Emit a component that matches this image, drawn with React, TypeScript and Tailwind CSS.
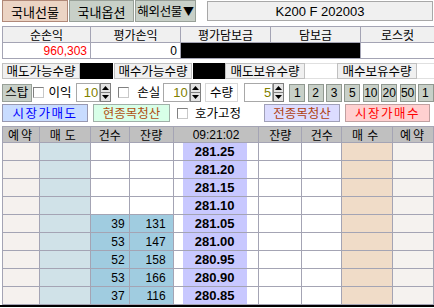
import React from "react";

const KR = "font-['Noto_Sans_CJK_KR','Liberation_Sans',sans-serif]";
const NUM = "font-['Liberation_Sans','DejaVu_Sans',sans-serif]";

function Check() {
  return <div className="w-[11px] h-[11px] border border-t-[#808080] border-l-[#808080] border-r-[#c8c8c8] border-b-[#c8c8c8] bg-white shrink-0" />;
}

function Arrows() {
  return (
    <div className="w-[11px] h-[19px] flex flex-col border border-[#808080] shrink-0">
      <div className="flex-1 bg-[#e4e4e4] flex items-center justify-center border-b border-[#808080]">
        <svg width="7" height="4" viewBox="0 0 7 4"><polygon points="3.5,0 7,4 0,4" fill="black" /></svg>
      </div>
      <div className="flex-1 bg-[#e4e4e4] flex items-center justify-center">
        <svg width="7" height="4" viewBox="0 0 7 4"><polygon points="0,0 7,0 3.5,4" fill="black" /></svg>
      </div>
    </div>
  );
}

const rows = [
  { p: "281.25" },
  { p: "281.20" },
  { p: "281.15" },
  { p: "281.10" },
  { p: "281.05", c: "39", q: "131" },
  { p: "281.00", c: "53", q: "147" },
  { p: "280.95", c: "52", q: "158" },
  { p: "280.90", c: "53", q: "166" },
  { p: "280.85", c: "37", q: "116" },
];

const bd = "border-r border-b border-[#a4a4b4]";

export default function App() {
  return (
    <div className={`w-[434px] h-[308px] bg-white overflow-hidden flex flex-col text-[12px] text-black leading-none whitespace-nowrap ${KR}`}>
      {/* Row 1 */}
      <div className="flex h-[22px] shrink-0">
        <div className="ml-[2px] w-[66px] h-[22px] bg-[#ecd4c4] border border-[#b08878] flex items-center justify-center text-[13px]">국내선물</div>
        <div className="ml-[1px] w-[65px] h-[22px] bg-[#c8d0c8] border border-[#98a098] flex items-center justify-center text-[13px]">국내옵션</div>
        <div className="ml-[1px] w-[61px] h-[22px] bg-[#c8d0c8] border border-[#98a098] flex items-center justify-center text-[12.5px] tracking-[-0.3px] overflow-hidden">해외선물<span className="text-[11px] ml-[1px]">▼</span></div>
        <div className={`ml-auto mr-[1px] mt-[1px] w-[226px] h-[20px] bg-[#f0f0f0] border border-[#a8a8a8] flex items-center justify-center text-[13px] ${NUM}`}>K200 F 202003</div>
      </div>

      {/* Row 2 */}
      <div className="mt-[4px] ml-[2px] w-[432px] grid grid-cols-[88px_90px_90px_90px_74px] border-l border-t border-[#a4a4b4] shrink-0">
        {["순손익", "평가손익", "평가담보금", "담보금", "로스컷"].map((h) => (
          <div key={h} className={`h-[16px] bg-[#f0f0f0] flex items-center justify-center ${bd}`}>{h}</div>
        ))}
        <div className={`h-[16px] bg-white flex items-center justify-end pr-[3px] text-[#ff0000] ${NUM} ${bd}`}>960,303</div>
        <div className={`h-[16px] bg-white flex items-center justify-end pr-[3px] ${NUM} ${bd}`}>0</div>
        <div className="h-[16px] bg-black border-b border-[#a4a4b4]" />
        <div className={`h-[16px] bg-black ${bd}`} />
        <div className={`h-[16px] bg-white ${bd}`} />
      </div>

      {/* Row 3 */}
      <div className="mt-[4px] h-[16px] flex shrink-0 text-[12.5px]">
        <div className="ml-[2px] w-[78px] bg-[#f0f0f0] border border-[#c0c0c0] flex items-center justify-center">매도가능수량</div>
        <div className="w-[33px] bg-black" />
        <div className="ml-[1px] w-[78px] bg-[#f0f0f0] border border-[#c0c0c0] flex items-center justify-center">매수가능수량</div>
        <div className="ml-[1px] w-[32px] bg-black" />
        <div className="w-[80px] bg-[#f0f0f0] border border-[#c0c0c0] flex items-center justify-center">매도보유수량</div>
        <div className="w-[32px] bg-white border-y border-[#e0e0e0]" />
        <div className="w-[80px] bg-[#f0f0f0] border border-[#c0c0c0] flex items-center justify-center">매수보유수량</div>
        <div className="flex-1 bg-white border-y border-[#e0e0e0]" />
      </div>

      {/* Row 4 */}
      <div className="mt-[4px] h-[19px] flex items-center shrink-0 text-[12.5px]">
        <div className="ml-[2px] w-[30px] h-[18px] bg-[#c8d0c8] border border-[#98a098] flex items-center justify-center">스탑</div>
        <div className="ml-[1px]"><Check /></div>
        <div className="ml-[5px] w-[25px]">이익</div>
        <div className="ml-[3px] flex">
          <div className={`w-[24px] h-[19px] bg-white border border-[#a8a8a8] flex items-center justify-end pr-[1px] text-[#808000] text-[13px] ${NUM}`}>10</div>
          <Arrows />
        </div>
        <div className="ml-[7px]"><Check /></div>
        <div className="ml-[8px] w-[25px]">손실</div>
        <div className="ml-[1px] flex">
          <div className={`w-[27px] h-[19px] bg-white border border-[#a8a8a8] flex items-center justify-end pr-[1px] text-[#808000] text-[13px] ${NUM}`}>10</div>
          <Arrows />
        </div>
        <div className="ml-[4px] w-[34px] h-[19px] bg-white border border-[#d8d8d8] flex items-center justify-center">수량</div>
        <div className="ml-[6px] flex">
          <div className={`w-[29px] h-[19px] bg-white border border-[#a8a8a8] flex items-center justify-end pr-[1px] text-[#808000] text-[13px] ${NUM}`}>5</div>
          <Arrows />
        </div>
        <div className={`ml-[5px] flex gap-[2.4px] ${NUM}`}>
          {["1", "2", "3", "5", "10", "20", "50"].map((n) => (
            <div key={n} className="w-[16px] h-[18px] shrink-0 bg-[#c8d0c8] border border-[#909890] flex items-center justify-center text-[12px]">{n}</div>
          ))}
          <div className="w-[16px] h-[18px] shrink-0 bg-[#c8d0c8] border border-[#909890] flex items-center justify-start pl-[3px] text-[12px]">1</div>
        </div>
      </div>

      {/* Row 5 */}
      <div className="mt-[2px] h-[18px] flex items-center shrink-0 text-[12.5px]">
        <div className="ml-[2px] w-[86px] h-[18px] bg-[#c8dcff] border border-[#9898b0] flex items-center justify-center text-[#0000ff] tracking-[1.5px]">시장가매도</div>
        <div className="ml-[5px] w-[77px] h-[18px] bg-[#d8ffe8] border border-[#a0b0a8] flex items-center justify-center text-[#b05010]">현종목청산</div>
        <div className="ml-[7px]"><Check /></div>
        <div className="ml-[7px]">호가고정</div>
        <div className="ml-auto mr-[4px] flex gap-[5px]">
          <div className="w-[76px] h-[18px] bg-[#dcdcff] border border-[#a0a0b8] flex items-center justify-center text-[#b04010]">전종목청산</div>
          <div className="w-[85px] h-[18px] bg-[#ffd0d0] border border-[#c0a0a0] flex items-center justify-center text-[#ff0000] tracking-[1.5px]">시장가매수</div>
        </div>
      </div>

      {/* Table */}
      <div className="mt-[4px] ml-[2px] w-[432px] border-l border-t border-[#a4a4b4] shrink-0">
        <div className="flex h-[16px] bg-[#c0c0c0]">
          <div className={`w-[37px] flex items-center justify-center tracking-[2px] ${bd}`}>예약</div>
          <div className={`w-[51px] flex items-center justify-center tracking-[4px] ${bd}`}>매도</div>
          <div className={`w-[39px] flex items-center justify-center ${bd}`}>건수</div>
          <div className={`w-[44px] flex items-center justify-center ${bd}`}>잔량</div>
          <div className={`w-[86px] flex items-center justify-center ${NUM} ${bd}`}>09:21:02</div>
          <div className={`w-[43px] flex items-center justify-center ${bd}`}>잔량</div>
          <div className={`w-[40px] flex items-center justify-center ${bd}`}>건수</div>
          <div className={`w-[51px] flex items-center justify-center tracking-[4px] ${bd}`}>매수</div>
          <div className={`w-[41px] flex items-center justify-center tracking-[2px] ${bd}`}>예약</div>
        </div>
        {rows.map((r) => (
          <div key={r.p} className={`flex h-[18px] ${NUM}`}>
            <div className={`w-[37px] bg-[#f5f1ee] ${bd}`} />
            <div className={`w-[51px] bg-[#d0e2e8] ${bd}`} />
            <div className={`w-[39px] flex items-center justify-end pr-[4px] ${r.c ? "bg-[#a0cce0]" : "bg-white"} ${bd}`}>{r.c}</div>
            <div className={`w-[44px] flex items-center justify-end pr-[7px] ${r.q ? "bg-[#a0cce0]" : "bg-white"} ${bd}`}>{r.q}</div>
            <div className={`w-[86px] flex bg-white ${bd}`}>
              <div className="ml-[9px] w-[64px] bg-[#c8c8ff] flex items-center justify-center font-bold text-[13px]">{r.p}</div>
            </div>
            <div className={`w-[43px] bg-white ${bd}`} />
            <div className={`w-[40px] bg-white ${bd}`} />
            <div className={`w-[51px] bg-[#f0dcc8] ${bd}`} />
            <div className={`w-[41px] bg-[#f5f2ef] ${bd}`} />
          </div>
        ))}
      </div>
      <div className="h-[2px] bg-black shrink-0" />
    </div>
  );
}
